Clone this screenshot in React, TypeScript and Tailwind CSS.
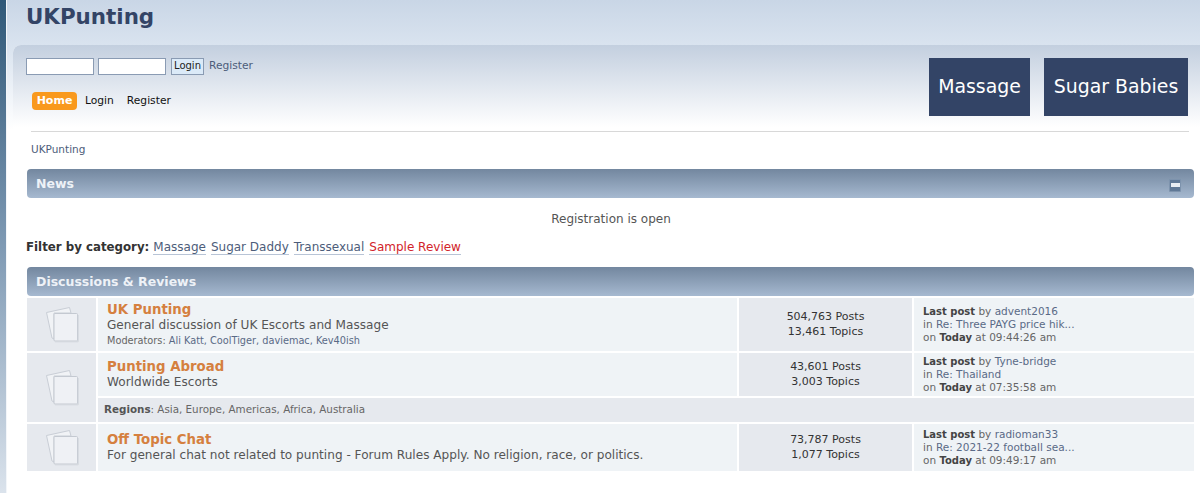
import React from 'react';

const PagesIcon = () => (
  <svg width="34" height="38" viewBox="0 0 34 38" fill="none">
    <path d="M1.5 6.5 L24.5 1.5 L26 7 L9 7 L9 33 L7 32 Z" fill="#f1f3f6" stroke="#c9ced6" strokeWidth="1" />
    <rect x="9" y="7.5" width="23.5" height="27.5" rx="1" fill="#eff1f5" stroke="#c4c9d1" strokeWidth="1" />
    <path d="M10 35.8 H33.2 V9" stroke="#d3d7dd" strokeWidth="1" />
  </svg>
);

const IconCell = () => (
  <div className="w-[69px] shrink-0 bg-[#e6e9ee] flex items-center justify-center">
    <PagesIcon />
  </div>
);

const Stats = ({ posts, topics }: { posts: string; topics: string }) => (
  <div className="w-[173px] shrink-0 bg-[#e6e9ee] pb-[1px] flex flex-col items-center justify-center text-[11px] leading-[15px] text-[#333]">
    <span>{posts} Posts</span>
    <span>{topics} Topics</span>
  </div>
);

const LastPost = ({ user, topic, time }: { user: string; topic: string; time: string }) => (
  <div className="w-[280px] shrink-0 bg-[#eff3f6] pl-[9px] flex flex-col justify-center text-[10.5px] leading-[12.5px] text-[#666]">
    <span><b className="text-[10px] text-[#444]">Last post</b> by <span className="text-[#5a6a86]">{user}</span></span>
    <span>in <span className="text-[#5a6a86]">{topic}</span></span>
    <span>on <b className="text-[10px] text-[#444]">Today</b> at {time}</span>
  </div>
);

const Title = ({ title, desc, mods }: { title: string; desc: string; mods?: string }) => (
  <div className="flex-1 min-w-0 bg-[#eff3f6] pl-[9px] flex flex-col justify-center">
    <a className="text-[13.3px] leading-[16px] font-bold text-[#d5803f]">{title}</a>
    <p className="text-[12.1px] leading-[15px] text-[#555]">{desc}</p>
    {mods && <p className="text-[9.75px] leading-[15px] text-[#666]">Moderators: <span className="text-[#5a6a86]">{mods}</span></p>}
  </div>
);

const Filter = ({ label, red }: { label: string; red?: boolean }) => (
  <a className={`border-b border-[#b8c4d6] text-[12px] leading-[14px] ${red ? 'text-[#d2232a]' : 'text-[#4d5d7a]'}`}>{label}</a>
);

const CatBar = ({ children }: { children: React.ReactNode }) => (
  <div className="h-[29px] rounded-[4px] bg-gradient-to-b from-[#73879f] to-[#a6b9d0] flex items-center justify-between pl-[9px] pr-[13px] pt-[1px]">
    {children}
  </div>
);

export default function App() {
  return (
    <div className="flex h-[493px] w-[1200px] overflow-hidden bg-white font-['DejaVu_Sans',sans-serif]">
      <div className="w-[6px] shrink-0 bg-gradient-to-b from-[#2f5878] via-[#7f9ab4] to-[#dbe3ec]" />
      <div className="flex-1 flex flex-col border-l border-[#f2f5f9] bg-[linear-gradient(#c9d6e6,#d9e3ef_45px,#ffffff_130px)]">
        <div className="h-[45px] shrink-0 pl-[19px] pt-[2px]">
          <h1 className="text-[21.4px] leading-[30px] font-bold text-[#334466]">UKPunting</h1>
        </div>
        <div className="flex-1 ml-[6px] rounded-tl-lg bg-white min-h-0">
          <div className="bg-[linear-gradient(#c3cfdf,#ffffff)] rounded-tl-lg h-[82px] flex justify-between pl-[13px] pr-[12px] pt-[13px]">
            <div>
              <div className="flex items-center gap-[4px] h-[16px]">
                <input className="w-[68px] h-[17px] bg-white border border-[#8a9bb3]" />
                <input className="w-[68px] h-[17px] bg-white border border-[#8a9bb3]" />
                <button className="w-[33px] h-[17px] ml-[1px] bg-[#dbeaf8] border border-[#8a9bb3] text-[10px] leading-[14px] text-[#222]">Login</button>
                <a className="text-[10.7px] text-[#4d5d7a] ml-[1px] pt-[1px]">Register</a>
              </div>
              <nav className="flex items-center mt-[18px] ml-[6px] text-[10.7px] text-[#111]">
                <a className="bg-[#f9991d] text-white text-[11px] font-bold rounded-[4px] w-[45px] h-[18px] flex items-center justify-center mr-[8px]">Home</a>
                <a className="mr-[13px]">Login</a>
                <a>Register</a>
              </nav>
            </div>
            <div className="flex gap-[14px]">
              <a className="w-[101px] h-[58px] pb-[2px] bg-[#334466] text-white text-[18.9px] flex items-center justify-center">Massage</a>
              <a className="w-[144px] h-[58px] pb-[2px] bg-[#334466] text-white text-[18.9px] flex items-center justify-center">Sugar Babies</a>
            </div>
          </div>
          <div className="ml-[18px] mr-[11px] mt-[4px] border-t border-[#d8d8d8]" />
          <div className="ml-[18px] mt-[11px] text-[10.5px] leading-[13px] text-[#4d5d7a]">UKPunting</div>
          <div className="ml-[14px] mr-[6px] mt-[13px]">
            <CatBar>
              <span className="text-[12.5px] font-bold text-[#eef2f7]">News</span>
              <span className="w-[12px] h-[13px] mt-[2px] rounded-[1px] bg-[#5f7896] border border-[#7d93ad] flex items-center justify-center">
                <span className="w-[9px] h-[4px] bg-[#e8edf3]" />
              </span>
            </CatBar>
          </div>
          <div className="mt-[14px] pl-[9px] text-center text-[12px] leading-[15px] text-[#555]">Registration is open</div>
          <div className="ml-[13px] mt-[13px] flex items-center gap-[5px] text-[11.8px] leading-[15px] text-[#333]">
            <b className="mr-[-1px]">Filter by category:</b>
            <Filter label="Massage" />
            <Filter label="Sugar Daddy" />
            <Filter label="Transsexual" />
            <Filter label="Sample Review" red />
          </div>
          <div className="ml-[14px] mr-[6px] mt-[12px]">
            <CatBar>
              <span className="text-[12.5px] font-bold text-[#eef2f7]">Discussions &amp; Reviews</span>
            </CatBar>
            <div className="mt-[2px] flex flex-col gap-[2px]">
              <div className="flex gap-[2px] h-[53px]">
                <IconCell />
                <Title title="UK Punting" desc="General discussion of UK Escorts and Massage" mods="Ali Katt, CoolTiger, daviemac, Kev40ish" />
                <Stats posts="504,763" topics="13,461" />
                <LastPost user="advent2016" topic="Re: Three PAYG price hik..." time="09:44:26 am" />
              </div>
              <div className="flex gap-[2px] h-[69px]">
                <IconCell />
                <div className="flex-1 flex flex-col gap-[2px] min-w-0">
                  <div className="flex gap-[2px] h-[43px]">
                    <Title title="Punting Abroad" desc="Worldwide Escorts" />
                    <Stats posts="43,601" topics="3,003" />
                    <LastPost user="Tyne-bridge" topic="Re: Thailand" time="07:35:58 am" />
                  </div>
                  <div className="flex-1 bg-[#e6e9ee] pl-[6px] flex items-center text-[10.35px] text-[#666] whitespace-pre">
                    <b className="text-[#555]">Regions</b>: Asia, Europe, Americas, Africa, Australia
                  </div>
                </div>
              </div>
              <div className="flex gap-[2px] h-[47px]">
                <IconCell />
                <Title title="Off Topic Chat" desc="For general chat not related to punting - Forum Rules Apply. No religion, race, or politics." />
                <Stats posts="73,787" topics="1,077" />
                <LastPost user="radioman33" topic="Re: 2021-22 football sea..." time="09:49:17 am" />
              </div>
            </div>
          </div>
        </div>
      </div>
    </div>
  );
}
